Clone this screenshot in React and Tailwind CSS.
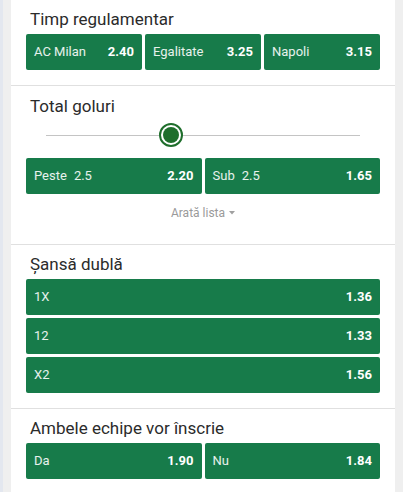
import React from "react";

function Odd({ label, sub, value, row }) {
  return (
    <div
      className={
        (row ? "w-full" : "flex-1") +
        " h-[36px] shrink-0 bg-[#177b4a] rounded-[2px] px-[8px] flex items-center justify-between text-white"
      }
    >
      <span className="text-[13px] text-white/90">
        {label}
        {sub && <span className="ml-[7px]">{sub}</span>}
      </span>
      <span className="text-[13px] font-bold">{value}</span>
    </div>
  );
}

function Title({ children }) {
  return (
    <h3 className="h-[24px] leading-[24px] text-[17px] text-[#2b2b2b] pl-[4px] mb-[3px]">
      {children}
    </h3>
  );
}

export default function App() {
  return (
    <div
      className="min-h-screen w-[403px] flex bg-[#efefef] border-l-[3px] border-[#e3e7ef] overflow-hidden"
      style={{ fontFamily: "Roboto, 'Liberation Sans', sans-serif" }}
    >
      <div className="ml-[8px] w-[384px] bg-white">
        {/* Timp regulamentar */}
        <section className="pt-[7px] pb-[15px] px-[15px] border-b border-[#e0e0e0]">
          <Title>Timp regulamentar</Title>
          <div className="flex gap-[3px]">
            <Odd label="AC Milan" value="2.40" />
            <Odd label="Egalitate" value="3.25" />
            <Odd label="Napoli" value="3.15" />
          </div>
        </section>

        {/* Total goluri */}
        <section className="pt-[8px] pb-[23px] px-[15px] border-b border-[#e0e0e0]">
          <Title>Total goluri</Title>
          <div className="h-[34px] mb-[6px] -mt-[3px] px-[20px] flex items-center">
            <div className="flex-1 h-[1px] bg-[#c4c4c4] relative">
              <div className="absolute left-[113px] -top-[12px] w-[24px] h-[24px] rounded-full border-[2px] border-[#1f6e2c] bg-white flex items-center justify-center">
                <div className="w-[16px] h-[16px] rounded-full bg-[#1f6e2c]" />
              </div>
            </div>
          </div>
          <div className="flex gap-[3px]">
            <Odd label="Peste" sub="2.5" value="2.20" />
            <Odd label="Sub" sub="2.5" value="1.65" />
          </div>
          <div className="mt-[11px] flex items-center justify-center text-[12px] text-[#9a9a9a] leading-[16px]">
            Arată lista
            <svg className="ml-[4px]" width="6" height="4" viewBox="0 0 6 4">
              <path d="M0 0h6L3 3.5z" fill="#a0a0a0" />
            </svg>
          </div>
        </section>

        {/* Sansa dubla */}
        <section className="pt-[7px] pb-[15px] px-[15px] border-b border-[#e0e0e0]">
          <Title>Șansă dublă</Title>
          <div className="flex flex-col gap-[3px]">
            <Odd row label="1X" value="1.36" />
            <Odd row label="12" value="1.33" />
            <Odd row label="X2" value="1.56" />
          </div>
        </section>

        {/* Ambele echipe vor inscrie */}
        <section className="pt-[7px] pb-[15px] px-[15px]">
          <Title>Ambele echipe vor înscrie</Title>
          <div className="flex gap-[3px]">
            <Odd label="Da" value="1.90" />
            <Odd label="Nu" value="1.84" />
          </div>
        </section>
      </div>
    </div>
  );
}
